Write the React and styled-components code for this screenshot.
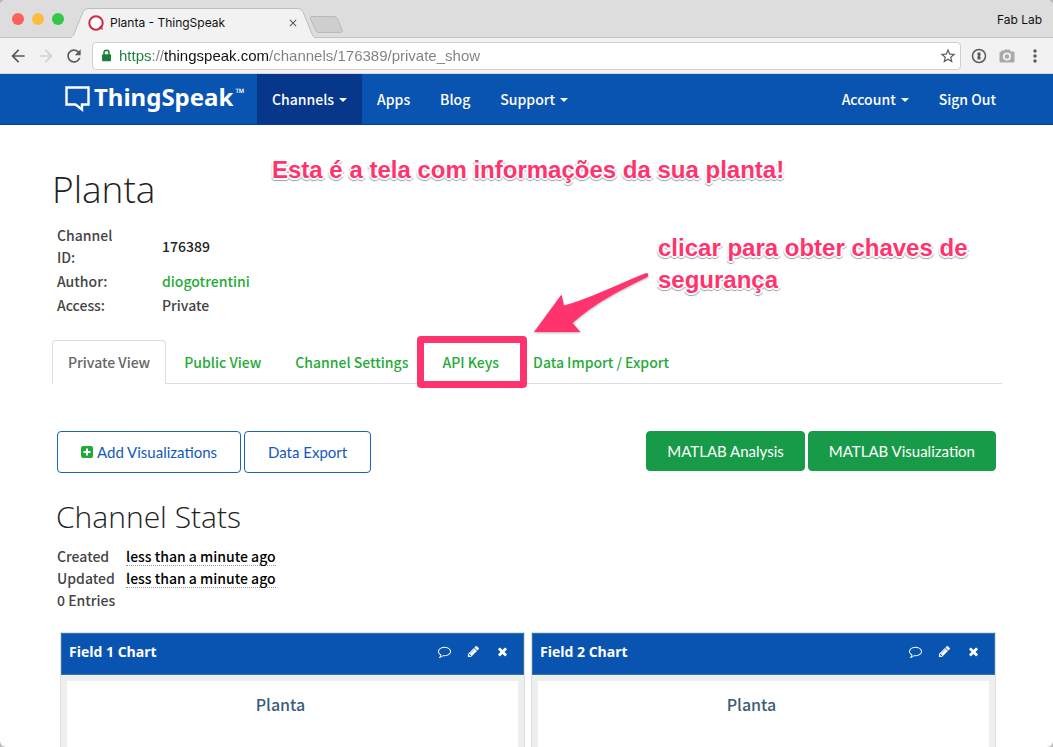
import React from "react";
import styled, { createGlobalStyle, css } from "styled-components";
import {
  MdArrowBack,
  MdArrowForward,
  MdRefresh,
  MdStarBorder,
  MdMoreVert,
  MdClose,
} from "react-icons/md";

const blue = "#0a54b1";
const navy = "#07378a";
const green = "#1fab38";
const pink = "#ff346e";
const bodyFont = `"Noto Sans CJK SC", "Noto Sans", sans-serif`;
const headingFont = `"Open Sans", sans-serif`;
const buttonFont = `Lato, "Open Sans", sans-serif`;

const GlobalStyle = createGlobalStyle`
  *, *::before, *::after { box-sizing: border-box; }
  html { background: #b9b9b9; }
  body { margin: 0; font: 500 14px/22px ${bodyFont}; color: #444; }
  button, input { font: inherit; margin: 0; }
  button { cursor: pointer; }
  a { text-decoration: none; }
`;

const Window = styled.div`
  min-height: 100vh;
  display: flex;
  flex-direction: column;
  background: #fff;
  border-radius: 6px;
  overflow: hidden;
`;

/* Browser chrome */

const TitleBar = styled.div`
  height: 38px;
  display: flex;
  align-items: flex-end;
  padding: 0 11px 0 12px;
  background: #dddddd;
  border-bottom: 1px solid #c3c3c3;
  font: 12px/16px Inter, sans-serif;
  color: #111;
`;

const Lights = styled.div`
  display: flex;
  gap: 8px;
  height: 37px;
  align-items: center;
`;

const Light = styled.button`
  width: 12px;
  height: 12px;
  padding: 0;
  border: 0;
  border-radius: 50%;
  background: ${(p) => p.$color};
`;

const BrowserTab = styled.div`
  position: relative;
  width: 244px;
  height: 30px;
  margin: 0 -6px -1px 7px;
  padding: 0 16px 0 17px;
  display: flex;
  align-items: center;
  gap: 6px;
`;

const TabShape = styled.svg`
  position: absolute;
  inset: 0;
  width: 100%;
  height: 100%;
`;

const Favicon = styled.svg`
  position: relative;
  flex: none;
  width: 16px;
  height: 16px;
`;

const TabTitle = styled.span`
  position: relative;
  flex: 1;
  white-space: nowrap;
`;

const TabClose = styled.button`
  position: relative;
  display: flex;
  padding: 0;
  border: 0;
  background: none;
  color: #555;
`;

const NewTab = styled.button`
  height: 21px;
  padding: 0;
  border: 0;
  background: none;
  display: flex;
  align-items: flex-start;
`;

const Profile = styled.span`
  margin-left: auto;
  height: 25px;
`;

const Toolbar = styled.div`
  height: 36px;
  display: flex;
  align-items: center;
  gap: 8px;
  padding: 0 8px;
  background: #f2f2f2;
  border-bottom: 1px solid #d5d5d5;
`;

const IconButton = styled.button`
  width: 20px;
  height: 20px;
  padding: 0;
  border: 0;
  background: none;
  display: flex;
  align-items: center;
  justify-content: center;
  color: ${(p) => (p.$muted ? "#d2d2d2" : "#5a5a5a")};
`;

const Address = styled.div`
  flex: 1;
  height: 28px;
  padding: 0 2px 0 7px;
  display: flex;
  align-items: center;
  gap: 6px;
  background: #fff;
  border: 1px solid #cfcfcf;
  border-radius: 4px;
  color: #188038;
`;

const AddressInput = styled.input`
  flex: 1;
  min-width: 0;
  height: 20px;
  padding: 0;
  border: 0;
  outline: 0;
  font: 15px/20px "Liberation Sans", Arial, sans-serif;
  color: transparent;
  background: linear-gradient(
    90deg,
    #188038 33px,
    #808080 33px,
    #808080 45px,
    #111 45px,
    #111 150px,
    #808080 150px
  );
  background-clip: text;
`;

const Extensions = styled.div`
  display: flex;
  gap: 8px;
`;

/* Site navigation */

const NavBar = styled.nav`
  height: 51px;
  display: flex;
  padding: 0 42px 0 65px;
  background: ${blue};
  border-bottom: 1px solid #07408c;
`;

const Brand = styled.a`
  width: 192px;
  display: flex;
  align-items: flex-start;
  gap: 4px;
  padding-top: 7px;
  color: #fff;
  font: 700 24px/32px "Noto Sans", sans-serif;
`;

const BrandMark = styled.svg`
  flex: none;
  width: 25px;
  height: 26px;
  margin-top: 5px;
`;

const Trademark = styled.sup`
  margin-left: -2px;
  font: 12px/24px "Noto Sans", sans-serif;
`;

const NavLink = styled.a`
  display: flex;
  align-items: center;
  padding: 0 15px;
  color: #fff;
  background: ${(p) => (p.$active ? navy : "transparent")};
  ${(p) => p.$push && css`margin-left: auto;`}
`;

const Caret = styled.span`
  margin: 2px 0 0 5px;
  border: 4px solid transparent;
  border-top-color: currentColor;
  border-bottom: 0;
`;

/* Channel page */

const Main = styled.main`
  position: relative;
  flex: 1;
  display: flex;
  flex-direction: column;
  padding: 44px 51px 0 52px;
`;

const PageTitle = styled.h1`
  margin: 0;
  color: #222;
  font: 300 37px/40px ${headingFont};
`;

const InfoTable = styled.table`
  margin: 14px 0 0 4px;
  align-self: flex-start;
  border-collapse: collapse;

  th,
  td {
    padding: 1px;
    text-align: left;
    font-weight: 500;
  }
  th {
    padding-right: 40px;
  }
`;

const InfoLabel = styled.span`
  display: block;
  width: 64px;
`;

const TextLink = styled.a`
  color: ${green};
`;

const Strong = styled.span`
  color: #222;
`;

const Tabs = styled.div`
  display: flex;
  gap: 2px;
  margin: 23px 0 0;
  border-bottom: 1px solid #ddd;
`;

const Tab = styled.a`
  position: relative;
  margin-bottom: -1px;
  padding: 10px 15px 11px;
  border: 1px solid transparent;
  border-bottom: 0;
  border-radius: 4px 4px 0 0;
  white-space: nowrap;
  color: ${green};
  ${(p) =>
    p.$active &&
    css`
      color: #666;
      background: #fff;
      border-color: #ddd;
    `}
`;

const Highlight = styled.span`
  position: absolute;
  inset: -5px -13px -4px -10px;
  border: 7px solid ${pink};
  border-radius: 4px;
  pointer-events: none;
`;

const Actions = styled.div`
  display: flex;
  align-items: flex-start;
  gap: 3px;
  margin: 47px 6px 0 5px;
`;

const Button = styled.button`
  height: ${(p) => (p.$primary ? 40 : 42)}px;
  padding: 0 ${(p) => (p.$primary ? 20 : 23)}px 1px;
  display: flex;
  align-items: center;
  gap: 4px;
  font: 15px/20px ${buttonFont};
  white-space: nowrap;
  border: 1px solid ${(p) => (p.$primary ? "#189b48" : "#1c63c0")};
  border-radius: 4px;
  color: ${(p) => (p.$primary ? "#fff" : "#1259bb")};
  background: ${(p) => (p.$primary ? "#189b48" : "#fff")};
  ${(p) => p.$push && css`margin-left: auto;`}
`;

const SectionTitle = styled.h2`
  margin: 26px 4px 10px;
  color: #222;
  font: 300 30px/36px ${headingFont};
`;

const Stats = styled.div`
  margin-left: 5px;
`;

const StatRow = styled.div`
  display: flex;
  height: 22px;
`;

const StatLabel = styled.span`
  width: 69px;
`;

const StatValue = styled.span`
  height: 21px;
  color: #000;
  border-bottom: 1px dotted #999;
`;

const Charts = styled.div`
  flex: 1;
  display: grid;
  grid-template-columns: 1fr 1fr;
  gap: 8px;
  margin: 22px 7px 0 9px;
`;

const ChartCard = styled.section`
  display: flex;
  flex-direction: column;
  background: #eee;
  box-shadow: 0 0 0 1px #dedede;
`;

const ChartHeader = styled.header`
  height: 42px;
  padding: 0 13px 5px 7px;
  display: flex;
  align-items: center;
  gap: 13px;
  color: #fff;
  background: ${blue};
  border: 1px solid #2a7aa5;
`;

const ChartName = styled.h3`
  flex: 1;
  margin: 0;
  font: 700 14px/20px "Open Sans", sans-serif;
`;

const ChartTool = styled.button`
  width: 16px;
  height: 16px;
  padding: 0;
  border: 0;
  background: none;
  color: inherit;
  display: flex;
  align-items: center;
  justify-content: center;
`;

const ChartArea = styled.div`
  flex: 1;
  margin: 6px 6px 0;
  padding: 12px 24px 0 0;
  text-align: center;
  font-size: 16px;
  color: #3b5c7c;
  background: #fff;
`;

/* Tutorial notes drawn over the page */

const Note = styled.p`
  position: absolute;
  top: ${(p) => p.$top}px;
  left: ${(p) => p.$left}px;
  width: ${(p) => p.$width}px;
  margin: 0;
  font: 700 24px/32px "Liberation Sans", Arial, sans-serif;
  color: ${pink};
  text-shadow: 2px 0 #fff, -2px 0 #fff, 0 2px #fff, 0 -2px #fff, 1px 1px #fff,
    -1px 1px #fff, 1px -1px #fff, -1px -1px #fff, 2px 2px 1px #bbb,
    -2px 2px 1px #bbb, 0 3px 1px #999;
`;

const Arrow = styled.svg`
  position: absolute;
  top: 143px;
  left: 530px;
  width: 124px;
  height: 68px;
  filter: drop-shadow(0 1px 1px rgba(0, 0, 0, 0.3));
`;

const glyphs = {
  comment:
    "M896 384q-204 0-381.5 69.5t-282 187.5-104.5 255q0 112 71.5 213.5t201.5 175.5l87 50-27 96q-24 91-70 172 152-63 275-171l43-38 57 6q69 8 130 8 204 0 381.5-69.5t282-187.5 104.5-255-104.5-255-282-187.5-381.5-69.5zm896 512q0 174-120 321.5t-326 233-450 85.5q-70 0-145-8-198 175-460 242-49 14-114 22h-5q-15 0-27-10.5t-16-27.5v-1q-3-4-.5-12t2-10 4.5-9.5l6-9 7-8.5 8-9q7-8 31-34.5t34.5-38 31-39.5 32.5-51 27-59 26-76q-157-89-247.5-220t-90.5-281q0-174 120-321.5t326-233 450-85.5 450 85.5 326 233 120 321.5z",
  pencil:
    "M491 1536l91-91-235-235-91 91v107h128v128h107zm523-928q0-22-22-22-10 0-17 7l-542 542q-7 7-7 17 0 22 22 22 10 0 17-7l542-542q7-7 7-17zm-54-192l416 416-832 832h-416v-416zm683 96q0 53-37 90l-166 166-416-416 166-165q36-38 90-38 53 0 91 38l235 234q37 39 37 91z",
  times:
    "M1490 1322q0 40-28 68l-136 136q-28 28-68 28t-68-28l-294-294-294 294q-28 28-68 28t-68-28l-136-136q-28-28-28-68t28-68l294-294-294-294q-28-28-28-68t28-68l136-136q28-28 68-28t68 28l294 294 294-294q28-28 68-28t68 28l136 136q28 28 28 68t-28 68l-294 294 294 294q28 28 28 68z",
};

const Glyph = ({ name, size = 13 }) => (
  <svg width={size} height={size} viewBox="0 0 1792 1792" fill="currentColor" aria-hidden="true">
    <path d={glyphs[name]} />
  </svg>
);

const Chart = ({ title }) => (
  <ChartCard>
    <ChartHeader>
      <ChartName>{title}</ChartName>
      <ChartTool aria-label="Comment"><Glyph name="comment" /></ChartTool>
      <ChartTool aria-label="Edit"><Glyph name="pencil" /></ChartTool>
      <ChartTool aria-label="Remove"><Glyph name="times" /></ChartTool>
    </ChartHeader>
    <ChartArea>Planta</ChartArea>
  </ChartCard>
);

const BrowserChrome = () => (
  <>
    <TitleBar>
      <Lights>
        <Light $color="#fc605b" aria-label="Close window" />
        <Light $color="#fdbc40" aria-label="Minimise window" />
        <Light $color="#34c84a" aria-label="Zoom window" />
      </Lights>
      <BrowserTab>
        <TabShape viewBox="0 0 244 30" preserveAspectRatio="none" aria-hidden="true">
          <path
            d="M0 29.5 Q2 29 3 26 L12 4 Q13.500 .5 17 .5 H227 Q230.500 .5 232 4 L241 26 Q242 29 244 29.500 V30 H0z"
            fill="#f2f2f2"
            stroke="#bdbdbd"
          />
          <path d="M1 29.500H243" stroke="#f2f2f2" strokeWidth="2" />
        </TabShape>
        <Favicon viewBox="0 0 16 16" aria-hidden="true">
          <circle cx="8" cy="8" r="6.700" fill="#fff" stroke="#cf2a42" strokeWidth="2" />
          <path d="M10.500 12.500l3-2.500 1.500 5z" fill="#cf2a42" />
        </Favicon>
        <TabTitle>Planta - ThingSpeak</TabTitle>
        <TabClose aria-label="Close tab"><MdClose size={12} /></TabClose>
      </BrowserTab>
      <NewTab aria-label="New tab">
        <svg width="35" height="17" viewBox="0 0 35 17">
          <path
            d="M3 .5H25Q27.500 .5 28.500 3L33 14Q34 16.500 31.500 16.500H10Q7.500 16.500 6.500 14L1.500 3Q.5 .5 3 .5z"
            fill="#cfcfcf"
            stroke="#b9b9b9"
          />
        </svg>
      </NewTab>
      <Profile>Fab Lab</Profile>
    </TitleBar>
    <Toolbar>
      <IconButton aria-label="Back"><MdArrowBack size={20} /></IconButton>
      <IconButton aria-label="Forward" $muted><MdArrowForward size={20} /></IconButton>
      <IconButton aria-label="Reload"><MdRefresh size={20} /></IconButton>
      <Address>
        <svg width="13" height="13" viewBox="0 0 13 13" aria-hidden="true">
          <path d="M4 6V3.800A2.500 2.500 0 0 1 9 3.800V6" fill="none" stroke="currentColor" strokeWidth="1.500" />
          <rect x="2" y="5.200" width="9" height="7" rx="1" fill="currentColor" />
        </svg>
        <AddressInput
          aria-label="Address"
          defaultValue="https://thingspeak.com/channels/176389/private_show"
        />
        <IconButton aria-label="Bookmark"><MdStarBorder size={18} /></IconButton>
      </Address>
      <Extensions>
        <IconButton aria-label="Password manager">
          <svg width="16" height="16" viewBox="0 0 16 16">
            <circle cx="8" cy="8" r="6.500" fill="none" stroke="currentColor" strokeWidth="1.500" />
            <path d="M6.500 4.500h3v3l-.7.8.7.7v2.500h-3v-3l.7-.7-.7-.8z" fill="currentColor" />
          </svg>
        </IconButton>
        <IconButton aria-label="Screenshot">
          <svg width="16" height="14" viewBox="0 0 16 14">
            <path d="M2 3V1.500h2.500V2.500L5.500 .5h5L12 2.500h2.500Q15.500 2.500 15.500 3.500V12.500Q15.500 13.500 14.500 13.500H1.500Q.5 13.500 .5 12.500V4Q.5 3 1.500 3z" fill="#a9a9a9" />
            <circle cx="8" cy="7.500" r="3.200" fill="#a9a9a9" stroke="#f2f2f2" strokeWidth="1.800" />
          </svg>
        </IconButton>
        <IconButton aria-label="Menu"><MdMoreVert size={20} /></IconButton>
      </Extensions>
    </Toolbar>
  </>
);

export default function App() {
  return (
    <Window>
      <GlobalStyle />
      <BrowserChrome />
      <NavBar>
        <Brand href="#home">
          <BrandMark viewBox="0 0 25 26" aria-hidden="true">
            <path
              d="M1.500 1.500H23.500V18.500H17V23.500L10.500 18.500H1.500z"
              fill="none"
              stroke="#fff"
              strokeWidth="2.400"
            />
          </BrandMark>
          <span>ThingSpeak</span>
          <Trademark>™</Trademark>
        </Brand>
        <NavLink href="#channels" $active>Channels<Caret /></NavLink>
        <NavLink href="#apps">Apps</NavLink>
        <NavLink href="#blog">Blog</NavLink>
        <NavLink href="#support">Support<Caret /></NavLink>
        <NavLink href="#account" $push>Account<Caret /></NavLink>
        <NavLink href="#signout">Sign Out</NavLink>
      </NavBar>
      <Main>
        <PageTitle>Planta</PageTitle>
        <InfoTable>
          <tbody>
            <tr>
              <th scope="row"><InfoLabel>Channel ID:</InfoLabel></th>
              <td><Strong>176389</Strong></td>
            </tr>
            <tr>
              <th scope="row">Author:</th>
              <td><TextLink href="#author">diogotrentini</TextLink></td>
            </tr>
            <tr>
              <th scope="row">Access:</th>
              <td>Private</td>
            </tr>
          </tbody>
        </InfoTable>
        <Tabs>
          <Tab href="#private" $active>Private View</Tab>
          <Tab href="#public">Public View</Tab>
          <Tab href="#settings">Channel Settings</Tab>
          <Tab href="#keys">API Keys<Highlight /></Tab>
          <Tab href="#data">Data Import / Export</Tab>
        </Tabs>
        <Actions>
          <Button>
            <svg width="12" height="12" viewBox="0 0 12 12" aria-hidden="true">
              <rect width="12" height="12" rx="2" fill="#1fab38" />
              <path d="M6 2.500V9.500M2.500 6H9.500" stroke="#fff" strokeWidth="2" />
            </svg>
            Add Visualizations
          </Button>
          <Button>Data Export</Button>
          <Button $primary $push>MATLAB Analysis</Button>
          <Button $primary>MATLAB Visualization</Button>
        </Actions>
        <SectionTitle>Channel Stats</SectionTitle>
        <Stats>
          <StatRow><StatLabel>Created</StatLabel><StatValue>less than a minute ago</StatValue></StatRow>
          <StatRow><StatLabel>Updated</StatLabel><StatValue>less than a minute ago</StatValue></StatRow>
          <StatRow>0 Entries</StatRow>
        </Stats>
        <Charts>
          <Chart title="Field 1 Chart" />
          <Chart title="Field 2 Chart" />
        </Charts>
        <Note $top={29} $left={272} $width={540}>Esta é a tela com informações da sua planta!</Note>
        <Note $top={107} $left={658} $width={340}>clicar para obter chaves de segurança</Note>
        <Arrow viewBox="0 0 124 68" aria-hidden="true">
          <path
            d="M4 64L31.500 26.500L34 37.500C56 32 86 17 115.500 5.200Q118 4.500 118.300 7Q118.300 8.500 116.500 9.500C88 23 64 36 42.500 55L50.500 64z"
            fill={pink}
          />
        </Arrow>
      </Main>
    </Window>
  );
}
